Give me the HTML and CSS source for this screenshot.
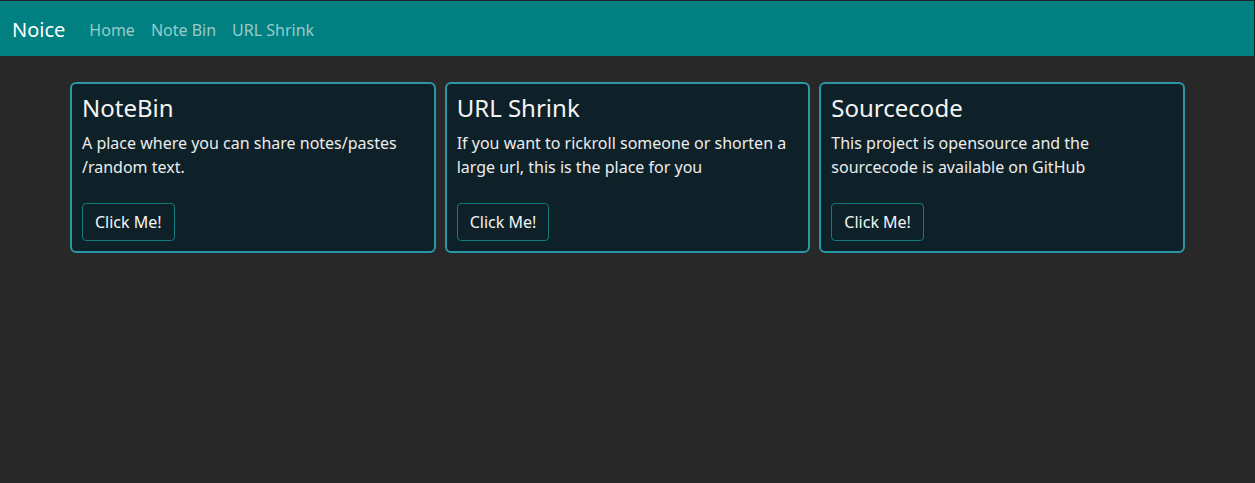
FILE: index.html
```html
<!DOCTYPE html>
<html>
<head>
<meta charset="utf-8">
<link rel="stylesheet" href="styles.css">
</head>
<body>
<nav class="navbar">
  <a class="brand">Noice</a>
  <ul class="nav">
    <li><a class="nav-link">Home</a></li>
    <li><a class="nav-link">Note Bin</a></li>
    <li><a class="nav-link">URL Shrink</a></li>
  </ul>
</nav>
<main class="container">
  <div class="card">
    <h5 class="card-title">NoteBin</h5>
    <p class="card-text">A place where you can share notes/pastes /random text.</p>
    <a class="btn">Click Me!</a>
  </div>
  <div class="card">
    <h5 class="card-title">URL Shrink</h5>
    <p class="card-text">If you want to rickroll someone or shorten a large url, this is the place for you</p>
    <a class="btn">Click Me!</a>
  </div>
  <div class="card">
    <h5 class="card-title">Sourcecode</h5>
    <p class="card-text">This project is opensource and the sourcecode is available on GitHub</p>
    <a class="btn">Click Me!</a>
  </div>
</main>
</body>
</html>
```
FILE: styles.css
```css
* { box-sizing: border-box; }
html, body { margin: 0; padding: 0; }
body {
  background: #282828;
  font-family: "Noto Sans", "Open Sans", sans-serif;
  font-size: 16px;
  line-height: 1.5;
  color: #f2f2f2;
  height: 483px;
  overflow: hidden;
}
.navbar {
  display: flex;
  align-items: center;
  height: 56px;
  background: #008080;
  border-top: 1px solid #1c2228;
  border-right: 1px solid #1c2228;
  padding: 2px 12px 0;
}
.brand {
  font-size: 20px;
  color: #ffffff;
  margin-right: 16px;
  line-height: 30px;
}
.nav {
  display: flex;
  list-style: none;
  margin: 0;
  padding: 0;
}
.nav-link {
  display: block;
  padding: 8px;
  color: rgba(255, 255, 255, 0.6);
}
.container {
  width: 1115px;
  margin: 26px auto 0;
  display: grid;
  grid-template-columns: repeat(3, 1fr);
  gap: 9px;
  align-items: start;
}
.card {
  background: #0e2129;
  border: 2px solid #2b97a6;
  border-radius: 6px;
  padding: 10px 10px 10px;
}
.card-title {
  font-size: 24px;
  font-weight: 400;
  line-height: 1.2;
  margin: 0 0 8px;
  color: #f4f4f4;
}
.card-text {
  margin: 0 0 24px;
  color: #ececec;
}
.btn {
  display: inline-block;
  padding: 6px 12px;
  border: 1px solid #127c7c;
  border-radius: 4px;
  color: #f4f4f4;
  line-height: 24px;
}
```
